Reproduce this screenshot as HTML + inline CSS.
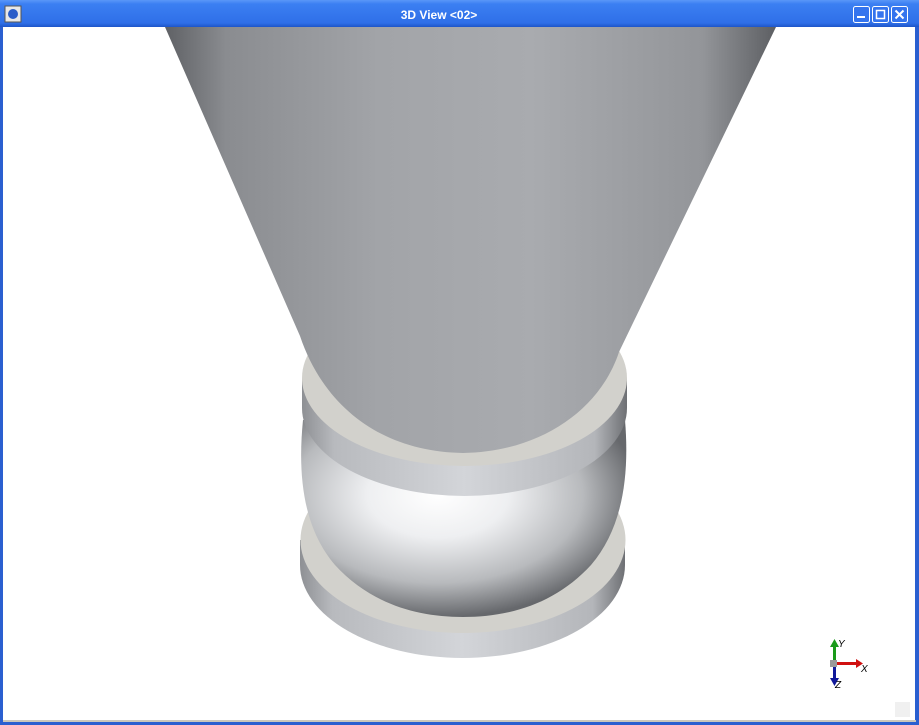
<!DOCTYPE html>
<html><head><style>
html,body{margin:0;padding:0;width:919px;height:725px;overflow:hidden;background:#fff;font-family:"Liberation Sans",sans-serif}
</style></head><body>
<svg width="919" height="725" viewBox="0 0 919 725" xmlns="http://www.w3.org/2000/svg">
<defs>
<linearGradient id="tb" x1="0" y1="0" x2="0" y2="1">
<stop offset="0" stop-color="#5a97f8"/><stop offset="0.15" stop-color="#3b7ff2"/><stop offset="0.85" stop-color="#2f6fe8"/><stop offset="1" stop-color="#1e55c8"/></linearGradient>
<linearGradient id="cone" x1="0" y1="0" x2="1" y2="0">
<stop offset="0" stop-color="#5f6165"/><stop offset="0.1" stop-color="#8a8c90"/><stop offset="0.35" stop-color="#a2a4a8"/><stop offset="0.6" stop-color="#a9abaf"/><stop offset="0.88" stop-color="#939599"/><stop offset="1" stop-color="#5d5f63"/></linearGradient>
<linearGradient id="side" x1="0" y1="0" x2="1" y2="0">
<stop offset="0" stop-color="#8e9094"/><stop offset="0.1" stop-color="#b8babe"/><stop offset="0.5" stop-color="#d3d5d9"/><stop offset="0.9" stop-color="#b4b6ba"/><stop offset="1" stop-color="#6e7074"/></linearGradient>
<radialGradient id="bulb" cx="0.42" cy="0.38" r="0.62">
<stop offset="0" stop-color="#ffffff"/><stop offset="0.35" stop-color="#eeeff1"/><stop offset="0.72" stop-color="#b8babd"/><stop offset="1" stop-color="#66686c"/></radialGradient>
</defs>
<rect x="0" y="0" width="919" height="725" fill="#2a5fd0"/>
<rect x="0" y="0" width="919" height="27" fill="url(#tb)"/>
<rect x="3" y="27" width="912" height="694" fill="#fff"/>
<rect x="3" y="720" width="913" height="2" fill="#c9c7bd"/>
<rect x="5" y="6" width="16" height="16" fill="#e8e8e8" stroke="#555" stroke-width="1"/>
<circle cx="13" cy="14" r="5" fill="#2a5cc8"/>
<text x="439" y="19" text-anchor="middle" fill="#fff" font-size="12" font-weight="bold">3D View &lt;02&gt;</text>
<g stroke="#fff" stroke-width="1" fill="#3474ee">
<rect x="853.5" y="6.5" width="16" height="16" rx="2"/>
<rect x="872.5" y="6.5" width="16" height="16" rx="2"/>
<rect x="891.5" y="6.5" width="16" height="16" rx="2"/>
</g>
<rect x="857" y="16" width="8" height="2" fill="#fff"/>
<rect x="876.5" y="10.5" width="8" height="8" fill="none" stroke="#fff" stroke-width="1.5"/>
<path d="M895.5 10.5 L903.5 18.5 M903.5 10.5 L895.5 18.5" stroke="#fff" stroke-width="2"/>
<path d="M300 540 L300 565 A162.5 93 0 0 0 625 565 L625 540 Z" fill="url(#side)"/>
<ellipse cx="463" cy="540" rx="162.5" ry="93" fill="#d2d1cc"/>
<path d="M303 420 C297 480 305 530 335 565 C370 603 415 617 463 617 C511 617 556 603 591 565 C621 530 630 480 625 420 Z" fill="url(#bulb)"/>
<path d="M302 378 L302 408 A162.5 88 0 0 0 627 408 L627 378 Z" fill="url(#side)"/>
<ellipse cx="464.5" cy="378" rx="162.5" ry="88" fill="#d2d1cc"/>
<path d="M165 27 L776 27 L619 352 C600 410 540 452 463 453 C385 452 325 410 300 336 Z" fill="url(#cone)"/>
<rect x="833" y="645" width="3" height="18" fill="#1a9a1a"/>
<path d="M830 647 L834.5 639 L839 647 Z" fill="#1a9a1a"/>
<rect x="836" y="662" width="22" height="3" fill="#d01010"/>
<path d="M856 659 L863 663.5 L856 668 Z" fill="#d01010"/>
<rect x="833" y="666" width="3" height="14" fill="#10189a"/>
<path d="M830 678 L834.5 686 L839 678 Z" fill="#10189a"/>
<rect x="830" y="660" width="7" height="7" fill="#9a9a9a"/>
<text x="838" y="647" font-size="10" font-style="italic">Y</text>
<text x="861" y="672" font-size="10" font-style="italic">X</text>
<text x="835" y="688" font-size="10" font-style="italic">Z</text>
<rect x="895" y="702" width="15" height="15" fill="#f0f0f0"/>
</svg>
</body></html>
